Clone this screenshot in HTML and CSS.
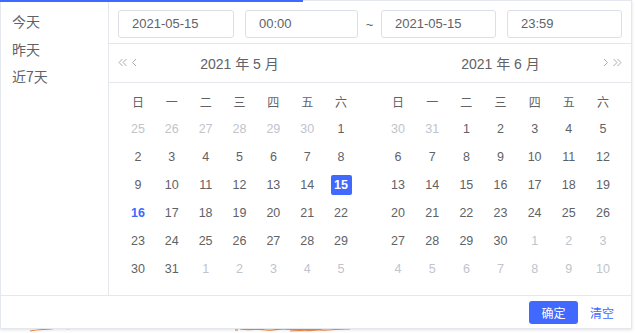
FILE: index.html
```html
<!DOCTYPE html>
<html lang="zh-CN">
<head>
    <meta charset="UTF-8">
    <meta name="viewport" content="width=device-width, initial-scale=1.0">
    <title>日期范围选择</title>
    <link rel="stylesheet" href="styles.css">
</head>
<body>
    <!-- page behind the popup -->
    <div class="page">
        <svg class="chart-line" width="635" height="8" viewBox="0 0 635 8">
            <path d="M30 6 C40 4 48 5 56 3 C62 2 66 5 72 3" />
            <path d="M235 5 L238 5" />
            <path d="M240 4 C250 6 258 3 266 5 C272 6 280 3 290 4" />
            <path d="M285 4 C300 6 310 3 320 5 C330 6 340 3 350 4" />
            <path d="M290 6 C300 5 312 7 322 4" />
        </svg>
    </div>

    <div class="active-bar"></div>

    <div class="picker">
        <div class="picker-body">
            <ul class="shortcuts">
                <li>今天</li>
                <li>昨天</li>
                <li>近7天</li>
            </ul>

            <div class="content">
                <div class="time-header">
                    <div class="input w1">2021-05-15</div>
                    <div class="input w2">00:00</div>
                    <span class="sep">~</span>
                    <div class="input w3">2021-05-15</div>
                    <div class="input w3">23:59</div>
                </div>

                <div class="panes">
                    <div class="pane">
                        <div class="pane-header">
                            <span class="arrows left">
                                <svg width="10" height="9" viewBox="0 0 10 9"><path d="M4.5 1 L1 4.5 L4.5 8 M8.5 1 L5 4.5 L8.5 8"/></svg>
                                <svg width="6" height="9" viewBox="0 0 6 9"><path d="M5 1 L1.5 4.5 L5 8"/></svg>
                            </span>
                            <span class="title">2021 年 5 月</span>
                        </div>
                        <div class="days">
                            <span class="wk">日</span><span class="wk">一</span><span class="wk">二</span><span class="wk">三</span><span class="wk">四</span><span class="wk">五</span><span class="wk">六</span>
                            <span class="off">25</span><span class="off">26</span><span class="off">27</span><span class="off">28</span><span class="off">29</span><span class="off">30</span><span>1</span>
                            <span>2</span><span>3</span><span>4</span><span>5</span><span>6</span><span>7</span><span>8</span>
                            <span>9</span><span>10</span><span>11</span><span>12</span><span>13</span><span>14</span><span class="picked"><b>15</b></span>
                            <span class="today">16</span><span>17</span><span>18</span><span>19</span><span>20</span><span>21</span><span>22</span>
                            <span>23</span><span>24</span><span>25</span><span>26</span><span>27</span><span>28</span><span>29</span>
                            <span>30</span><span>31</span><span class="off">1</span><span class="off">2</span><span class="off">3</span><span class="off">4</span><span class="off">5</span>
                        </div>
                    </div>

                    <div class="pane">
                        <div class="pane-header">
                            <span class="title">2021 年 6 月</span>
                            <span class="arrows right">
                                <svg width="6" height="9" viewBox="0 0 6 9"><path d="M1 1 L4.5 4.5 L1 8"/></svg>
                                <svg width="10" height="9" viewBox="0 0 10 9"><path d="M1.5 1 L5 4.5 L1.5 8 M5.5 1 L9 4.5 L5.5 8"/></svg>
                            </span>
                        </div>
                        <div class="days">
                            <span class="wk">日</span><span class="wk">一</span><span class="wk">二</span><span class="wk">三</span><span class="wk">四</span><span class="wk">五</span><span class="wk">六</span>
                            <span class="off">30</span><span class="off">31</span><span>1</span><span>2</span><span>3</span><span>4</span><span>5</span>
                            <span>6</span><span>7</span><span>8</span><span>9</span><span>10</span><span>11</span><span>12</span>
                            <span>13</span><span>14</span><span>15</span><span>16</span><span>17</span><span>18</span><span>19</span>
                            <span>20</span><span>21</span><span>22</span><span>23</span><span>24</span><span>25</span><span>26</span>
                            <span>27</span><span>28</span><span>29</span><span>30</span><span class="off">1</span><span class="off">2</span><span class="off">3</span>
                            <span class="off">4</span><span class="off">5</span><span class="off">6</span><span class="off">7</span><span class="off">8</span><span class="off">9</span><span class="off">10</span>
                        </div>
                    </div>
                </div>
            </div>
        </div>

        <div class="footer">
            <button type="button" class="ok-btn">确定</button>
            <button type="button" class="clear-btn">清空</button>
        </div>
    </div>
</body>
</html>
```

FILE: styles.css
```css
* {
    box-sizing: border-box;
}
body {
    margin: 0;
    width: 635px;
    height: 333px;
    overflow: hidden;
    background-color: #f3f4f6;
    font-family: "Liberation Sans", "Noto Sans CJK SC", sans-serif;
    color: #606266;
    position: relative;
}
.page {
    height: 333px;
    background: #fff;
}
.chart-line {
    position: absolute;
    left: 0;
    bottom: 0;
    fill: none;
    stroke: #f28a4a;
    stroke-width: 1.2;
}
.active-bar {
    position: absolute;
    top: 0;
    left: 0;
    width: 303px;
    height: 2px;
    background-color: #4169ff;
    z-index: 20;
}
.picker {
    position: absolute;
    top: 0;
    left: 0;
    width: 632px;
    height: 329px;
    background: #fff;
    border: 1px solid #e4e7ed;
    box-shadow: 0 1px 3px rgba(0, 0, 0, 0.12);
    z-index: 10;
    display: flex;
    flex-direction: column;
}
.picker-body {
    display: flex;
    flex: 1;
    border-bottom: 1px solid #e4e7ed;
}
.shortcuts {
    list-style: none;
    margin: 0;
    padding: 7px 0 0 11px;
    width: 108px;
    border-right: 1px solid #e4e7ed;
    font-size: 14px;
    font-family: "Noto Sans CJK SC", sans-serif;
}
.shortcuts li {
    line-height: 27.5px;
    color: #606266;
}
.content {
    flex: 1;
    display: flex;
    flex-direction: column;
}
.time-header {
    display: flex;
    align-items: center;
    padding: 9px 8px 5px 9px;
    border-bottom: 1px solid #e4e7ed;
}
.input {
    height: 28px;
    border: 1px solid #dcdfe6;
    border-radius: 3px;
    font-size: 13px;
    line-height: 26px;
    padding-left: 13px;
    color: #606266;
}
.w1 {
    width: 116px;
    margin-right: 11px;
}
.w2 {
    width: 113px;
}
.w3 {
    width: 115px;
}
.w3 + .w3 {
    margin-left: 11px;
}
.sep {
    width: 23px;
    text-align: center;
    font-size: 13px;
    color: #606266;
}
.panes {
    display: flex;
}
.pane {
    width: 50%;
    padding: 0 12px;
}
.pane + .pane {
    padding: 0 11px 0 11px;
}
.pane-header {
    height: 39px;
    border-bottom: 1px solid #e4e7ed;
    margin: 0 -12px;
    padding: 0 12px;
    display: flex;
    align-items: center;
    position: relative;
}
.pane + .pane .pane-header {
    margin: 0 -11px;
    padding: 0 11px;
}
.title {
    flex: 1;
    text-align: center;
    font-size: 14px;
    color: #606266;
    font-family: "Liberation Sans", "Noto Sans CJK SC", sans-serif;
}
.arrows {
    display: flex;
    gap: 3px;
    position: absolute;
    top: 14px;
}
.arrows.left {
    left: 9px;
}
.arrows.right {
    right: 9px;
}
.arrows svg {
    fill: none;
    stroke: #a8abb2;
    stroke-width: 1;
}
.days {
    display: grid;
    grid-template-columns: repeat(7, 1fr);
    grid-auto-rows: 28px;
    padding: 4px 0 12px;
    font-size: 12.5px;
}
.days span {
    display: flex;
    align-items: center;
    justify-content: center;
    color: #606266;
}
.days .wk {
    font-family: "Noto Sans CJK SC", sans-serif;
    font-size: 12px;
}
.days .off {
    color: #c0c4cc;
}
.days .today {
    color: #4169ff;
    font-weight: bold;
}
.days .picked b {
    width: 21px;
    height: 20px;
    line-height: 20px;
    text-align: center;
    background-color: #4169ff;
    color: #fff;
    border-radius: 2px;
}
.footer {
    height: 32px;
    display: flex;
    align-items: center;
    justify-content: flex-end;
    padding-right: 15px;
}
.ok-btn {
    width: 49px;
    height: 23px;
    border: none;
    border-radius: 3px;
    background-color: #4169ff;
    color: #fff;
    font-size: 12px;
    font-family: "Noto Sans CJK SC", sans-serif;
    cursor: pointer;
    margin-right: 10px;
}
.clear-btn {
    border: none;
    background: none;
    padding: 0 2px;
    color: #4169ff;
    font-size: 12px;
    font-family: "Noto Sans CJK SC", sans-serif;
    cursor: pointer;
}
```
